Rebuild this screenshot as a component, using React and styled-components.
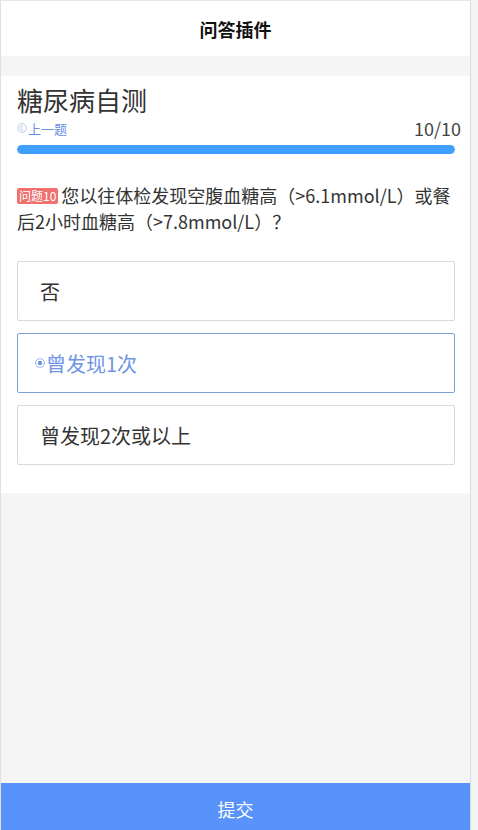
import React from "react";
import styled, { createGlobalStyle } from "styled-components";

const Global = createGlobalStyle`
  html, body { margin: 0; padding: 0; background: #f3f3f3; }
  body { font-family: "Noto Sans CJK SC", "Noto Sans", sans-serif; }
  * { box-sizing: border-box; }
`;

const Frame = styled.div`
  width: 471px;
  height: 830px;
  display: flex;
  flex-direction: column;
  background: #f5f5f5;
  border-left: 1px solid #e0e0e0;
  border-right: 1px solid #dcdcdc;
  border-top: 1px solid #e6e6e6;
`;

const Header = styled.header`
  height: 55px;
  flex: none;
  background: #fff;
  display: flex;
  align-items: center;
  justify-content: center;
  font-size: 18px;
  font-weight: 700;
  color: #111;
`;

const Card = styled.section`
  margin-top: 20px;
  background: #fff;
  padding: 9px 15px 28px 16px;
  display: flex;
  flex-direction: column;
`;

const Title = styled.h1`
  margin: 0;
  font-size: 26px;
  font-weight: 400;
  line-height: 30px;
  color: #333;
`;

const MetaRow = styled.div`
  display: flex;
  align-items: center;
  justify-content: space-between;
  height: 24px;
  margin-top: 1px;
`;

const Back = styled.a`
  display: flex;
  align-items: center;
  gap: 1px;
  font-size: 13px;
  color: #6a8ee4;
  text-decoration: none;
`;

const Count = styled.span`
  font-size: 18px;
  color: #444;
  margin-right: -6px;
  line-height: 24px;
`;

const Track = styled.div`
  margin-top: 5px;
  height: 9px;
  border-radius: 5px;
  background: #e8e8e8;
  overflow: hidden;
`;

const Fill = styled.div`
  height: 100%;
  border-radius: 5px;
  background: #409eff;
`;

const Question = styled.p`
  margin: 28px 0 0;
  font-size: 18px;
  line-height: 26px;
  color: #333;
`;

const Badge = styled.span`
  display: inline-block;
  background: #f07070;
  color: #fff;
  font-size: 12px;
  line-height: 16px;
  padding: 0 2px;
  border-radius: 2px;
  vertical-align: 2px;
  margin-right: 3px;
`;

const Options = styled.div`
  margin-top: 27px;
  display: flex;
  flex-direction: column;
  gap: 12px;
`;

const Option = styled.div`
  height: 60px;
  display: flex;
  align-items: center;
  gap: 1px;
  padding-left: ${(p) => (p.$selected ? "17px" : "22px")};
  border: 1px solid ${(p) => (p.$selected ? "#7d9fd6" : "#d9d9d9")};
  border-radius: 2px;
  font-size: 20px;
  color: ${(p) => (p.$selected ? "#6f94e4" : "#333")};
`;

const Spacer = styled.div`
  flex: 1;
`;

const Submit = styled.button`
  flex: none;
  height: 47px;
  border: none;
  background: #5893fc;
  color: #fff;
  font-family: inherit;
  font-size: 18px;
  padding: 4px 0 0;
`;

const BackIcon = () => (
  <svg width="10" height="10" viewBox="0 0 10 10">
    <circle cx="5" cy="5" r="4.3" fill="none" stroke="#b7c3e2" strokeWidth="0.9" />
    <path d="M6.3 3.4 A2 2 0 1 0 6.3 6.6" fill="none" stroke="#b7c3e2" strokeWidth="0.9" />
  </svg>
);

const RadioIcon = () => (
  <svg width="10" height="10" viewBox="0 0 10 10">
    <circle cx="5" cy="5" r="4.4" fill="none" stroke="#8aa8e6" strokeWidth="0.9" />
    <circle cx="5" cy="5" r="2.3" fill="#6f94e4" />
  </svg>
);

const options = ["否", "曾发现1次", "曾发现2次或以上"];

export default function App() {
  const selected = 1;
  return (
    <>
      <Global />
      <Frame>
        <Header>问答插件</Header>
        <Card>
          <Title>糖尿病自测</Title>
          <MetaRow>
            <Back href="#">
              <BackIcon />
              上一题
            </Back>
            <Count>10/10</Count>
          </MetaRow>
          <Track>
            <Fill style={{ width: "100%" }} />
          </Track>
          <Question>
            <Badge>问题10</Badge>
            您以往体检发现空腹血糖高（&gt;6.1mmol/L）或餐后2小时血糖高（&gt;7.8mmol/L）？
          </Question>
          <Options>
            {options.map((o, i) => (
              <Option key={o} $selected={i === selected}>
                {i === selected && <RadioIcon />}
                {o}
              </Option>
            ))}
          </Options>
        </Card>
        <Spacer />
        <Submit>提交</Submit>
      </Frame>
    </>
  );
}
